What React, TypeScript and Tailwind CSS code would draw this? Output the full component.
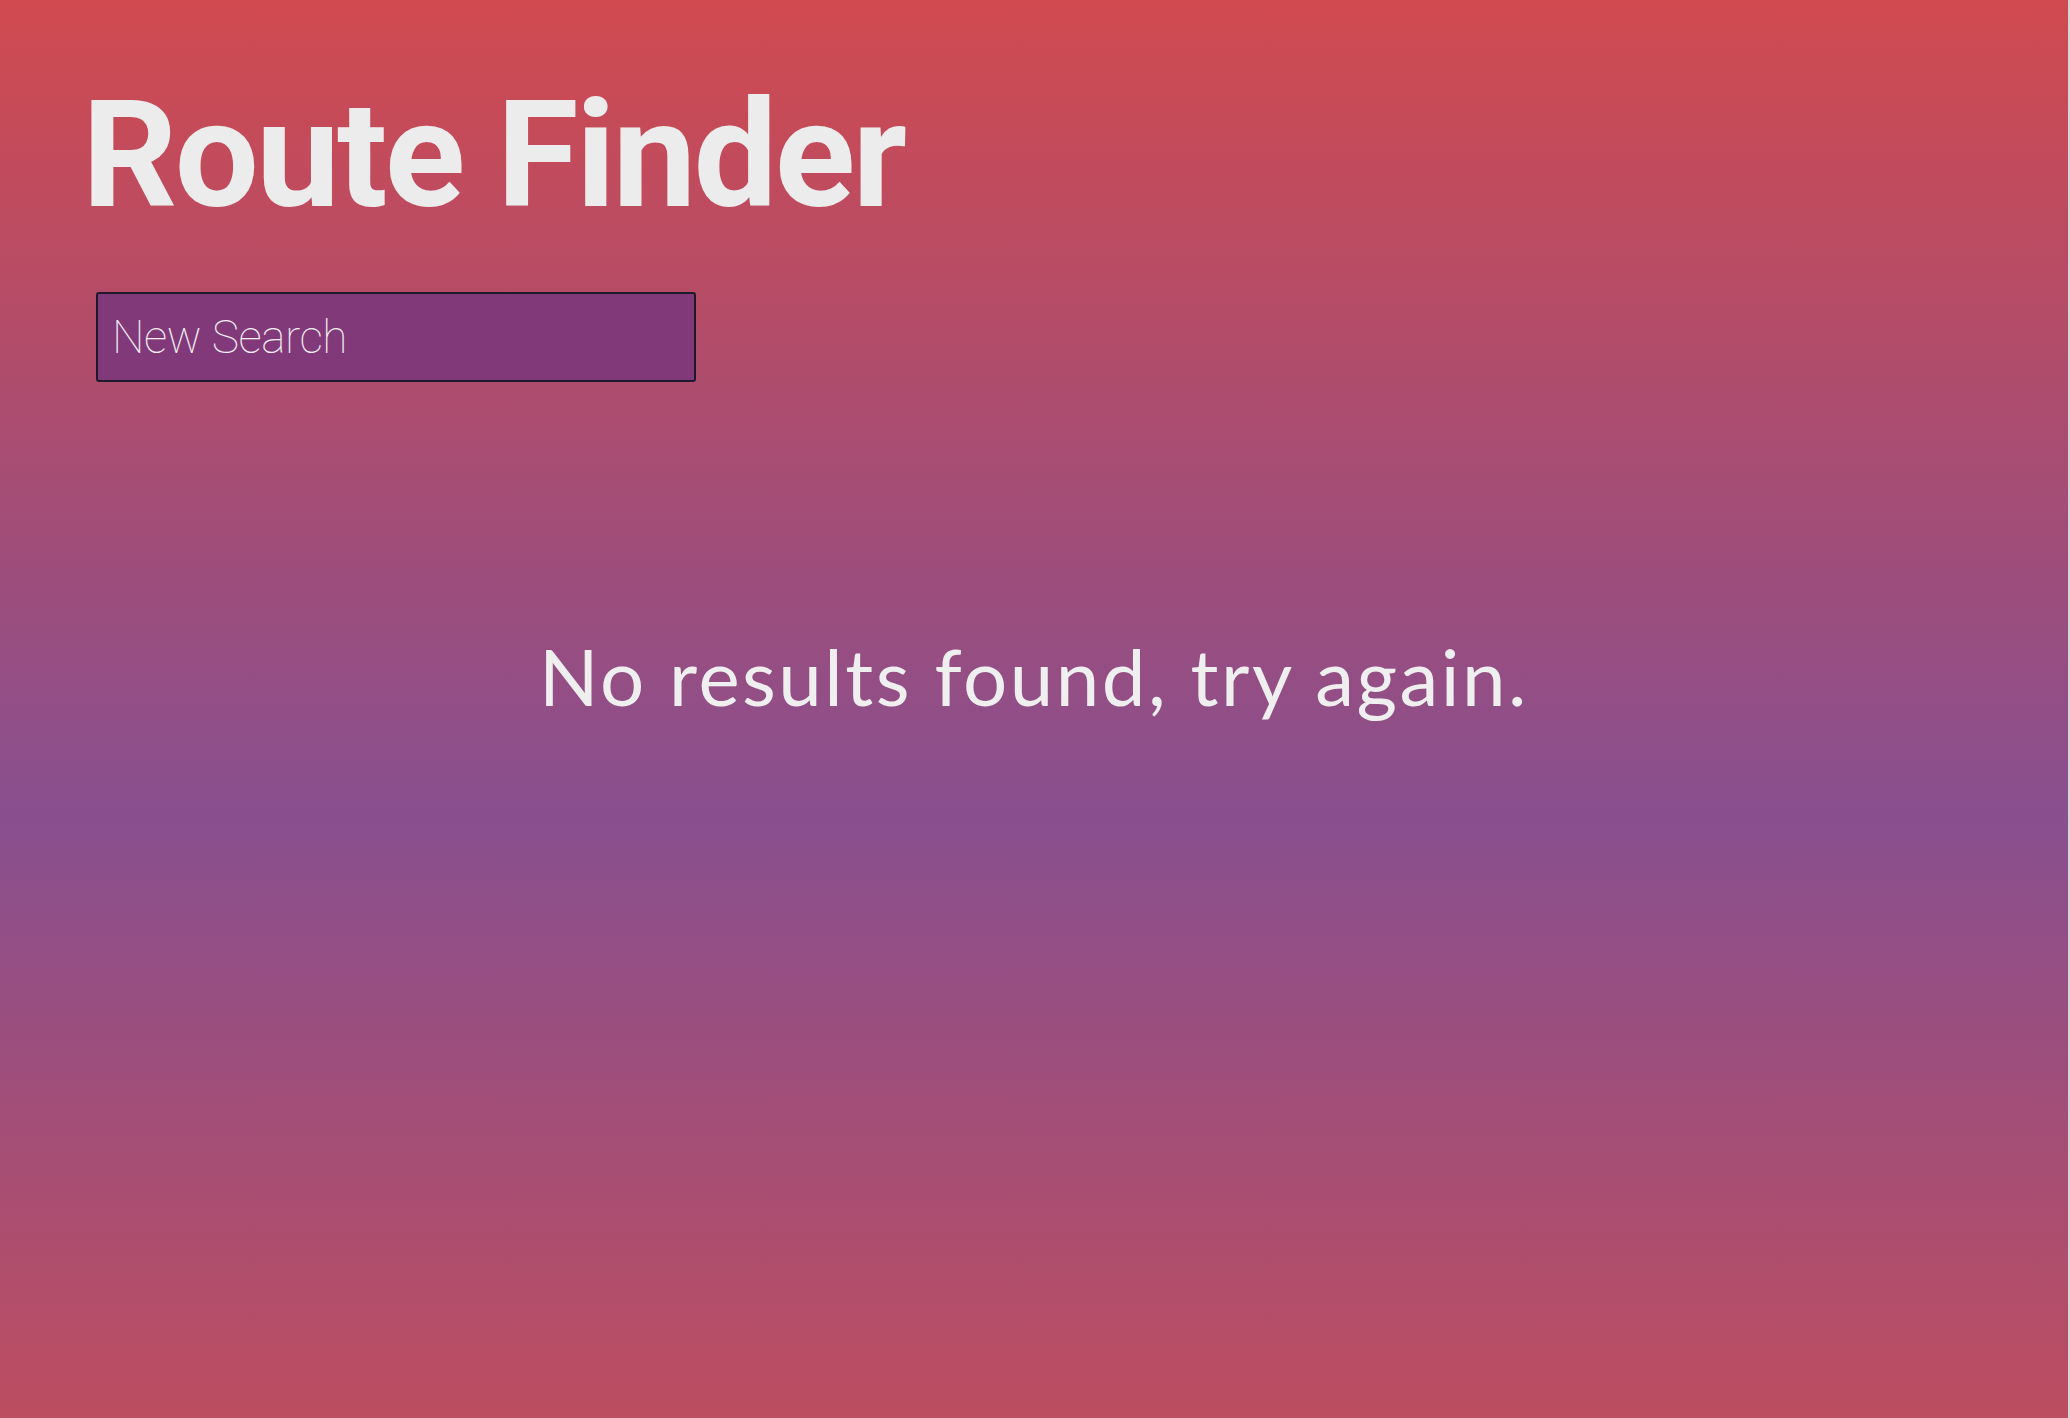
export default function App() {
  return (
    <div className="flex h-[1418px] w-full">
      <div className="flex-1 bg-[linear-gradient(180deg,#d04a4f_0%,#884f8f_57.7%,#bd4d60_100%)] px-[82px]">
        <h1 className="pt-[81px] font-['Roboto',sans-serif] text-[149px] font-bold leading-none tracking-[-0.018em] text-[#ececec]">
          Route Finder
        </h1>
        <button className="ml-[14px] mt-[62px] flex h-[90px] w-[600px] items-center rounded-[3px] border-2 border-[#1d1a2c] bg-[#82397a] px-[14px] text-left font-['Roboto',sans-serif] text-[46px] font-thin tracking-[-0.01em] text-[#f0f0f0]">
          New Search
        </button>
        <p className="mt-[255px] text-center font-['Lato',sans-serif] text-[78px] font-normal leading-none tracking-[0.032em] text-[#efefef]">
          No results found, try again.
        </p>
      </div>
      <div className="w-[2px] bg-[#d6d6d6]" />
    </div>
  );
}
